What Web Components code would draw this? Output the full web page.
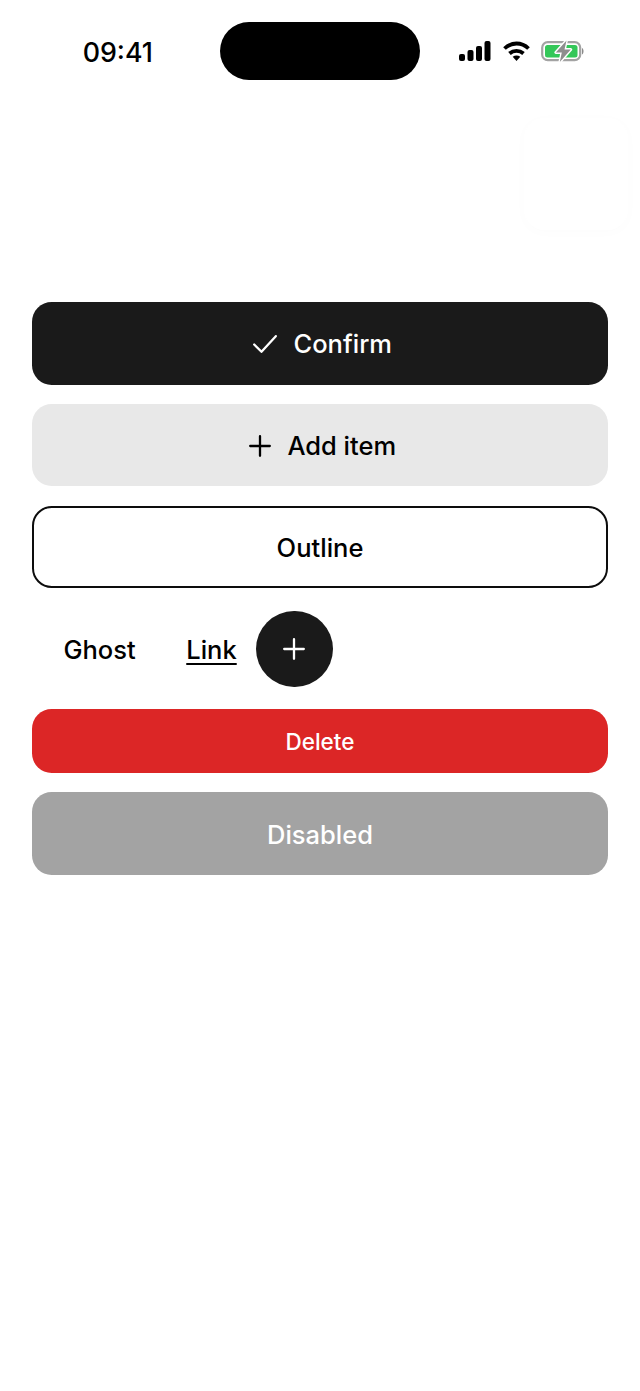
<!DOCTYPE html>
<html><head><meta charset="utf-8"><style>
html,body{margin:0;padding:0;background:#fff}
body{width:640px;height:1391px;overflow:hidden;font-family:Inter,"Liberation Sans",sans-serif}
</style></head><body>
<demo-screen>
<status-bar slot="status"></status-bar>
<float-card slot="float"></float-card>
<ui-btn kind="primary" icon="check">Confirm</ui-btn>
<ui-btn kind="secondary" icon="plus">Add item</ui-btn>
<ui-btn kind="outline">Outline</ui-btn>
<btn-row>
<ui-btn kind="ghost">Ghost</ui-btn>
<ui-btn kind="link">Link</ui-btn>
<ui-btn kind="fab" icon="plus"></ui-btn>
</btn-row>
<ui-btn kind="danger">Delete</ui-btn>
<ui-btn kind="disabled">Disabled</ui-btn>
</demo-screen>
<script>
const icons={
check:'<svg width="24" height="18" viewBox="0 0 24 18" fill="none" stroke="currentColor" stroke-width="2.300" stroke-linecap="round" stroke-linejoin="round"><path d="M1.200 9.500 8.500 16.800 22.800 1.200"/></svg>',
plus:'<svg width="22" height="22" viewBox="0 0 22 22" fill="none" stroke="currentColor" stroke-width="2.300" stroke-linecap="round"><path d="M1.200 11H20.800M11 1.200V20.800"/></svg>'
};
class DemoScreen extends HTMLElement{constructor(){super();this.attachShadow({mode:'open'}).innerHTML=`<style>
:host{display:block;width:640px;height:1391px;position:relative;background:#fff}
.top{height:302px;position:relative}
.list{display:flex;flex-direction:column;gap:19.200px;padding:0 32px}
::slotted(float-card){position:absolute;left:524px;top:118px}
</style><div class="top"><slot name="status"></slot><slot name="float"></slot></div><div class="list"><slot></slot></div>`}}
class StatusBar extends HTMLElement{constructor(){super();this.attachShadow({mode:'open'}).innerHTML=`<style>
:host{display:grid;grid-template-columns:220px 200px 220px;height:58px;padding-top:22px;font-family:Inter,"Liberation Sans",sans-serif}
.time{display:flex;align-items:center;justify-content:flex-end;padding:2px 67px 0 0;font-size:26.800px;font-weight:550;color:#000}
.island{background:#000;border-radius:29px}
.sys{display:flex;align-items:center;gap:12px;padding-left:39px}
svg{display:block}
</style><div class="time">09:41</div><div class="island"></div><div class="sys">
<svg width="32" height="20" viewBox="0 0 32 20"><rect x="0" y="13" width="6" height="7" rx="2"/><rect x="8.500" y="9" width="6" height="11" rx="2"/><rect x="17" y="5" width="6" height="15" rx="2"/><rect x="25.500" y="0" width="6" height="20" rx="2"/></svg>
<svg width="27" height="20" viewBox="0 0 27 20" fill="none" stroke="#000" stroke-width="3.800"><path d="M1.500 7.500C8.500 .8 18.500 .8 25.500 7.500"/><path d="M6.500 12.500C10.500 9 16.500 9 20.500 12.500"/><path d="M13.500 20 9.700 15.800C12 14 15 14 17.300 15.800Z" fill="#000" stroke="none"/></svg>
<svg width="44" height="24" viewBox="0 0 44 24" fill="none" style="margin-left:-1px"><rect x="1.200" y="3.200" width="38" height="18" rx="5.500" stroke="#a3a3a3" stroke-width="2.200"/><rect x="4" y="6" width="32.500" height="12.500" rx="2.500" fill="#34c759"/><path d="M41 9c2 .5 2 6 0 6.500z" fill="#8a8a8a"/><path d="M25.500 1.500 14.800 13.500h6l-2 9.500 11-12.500h-6.300z" fill="#8e8e8e" stroke="#fff" stroke-width="2.800" stroke-linejoin="round" paint-order="stroke"/></svg>
</div>`}}
class FloatCard extends HTMLElement{constructor(){super();this.attachShadow({mode:'open'}).innerHTML=`<style>
:host{display:block;width:104px;height:112px;border-radius:20px;background:#fff;box-shadow:0 2px 14px rgba(0,0,0,.014)}
</style>`}}
class BtnRow extends HTMLElement{constructor(){super();this.attachShadow({mode:'open'}).innerHTML=`<style>
:host{display:flex;align-items:center;height:82.600px;padding-top:1px;box-sizing:border-box}
</style><slot></slot>`}}
class UiBtn extends HTMLElement{constructor(){super();
const i=this.getAttribute('icon');
this.attachShadow({mode:'open'}).innerHTML=`<style>
:host{display:flex;align-items:center;justify-content:center;gap:16.500px;box-sizing:border-box;height:82.600px;padding-top:3px;border-radius:19.700px;font-family:Inter,"Liberation Sans",sans-serif;font-size:25.500px;font-weight:540;line-height:32px;color:#000}
:host([kind=primary]){background:#1a1a1a;color:#fff;padding:1px 0 0 5px}
:host([kind=secondary]){background:#e8e8e8;padding:2px 0 0 5px}
:host([kind=outline]){border:2.500px solid #0d0d0d}
:host([kind=ghost]){width:135px;height:77px;padding-top:2px}
:host([kind=link]){width:89px;height:77px;padding-top:2px;text-decoration:underline;text-underline-offset:4px;text-decoration-thickness:2px}
:host([kind=fab]){width:76.500px;height:76.500px;border-radius:50%;background:#1a1a1a;color:#fff;padding:0}
:host([kind=danger]){background:#dc2626;color:#fff;height:64px;font-size:22.500px;padding-top:1px}
:host([kind=disabled]){background:#a3a3a3;color:#fff}
svg{display:block;flex:none}
</style>${i?icons[i]:''}<slot></slot>`}}
customElements.define('demo-screen',DemoScreen);
customElements.define('status-bar',StatusBar);
customElements.define('float-card',FloatCard);
customElements.define('btn-row',BtnRow);
customElements.define('ui-btn',UiBtn);
</script>
</body></html>
